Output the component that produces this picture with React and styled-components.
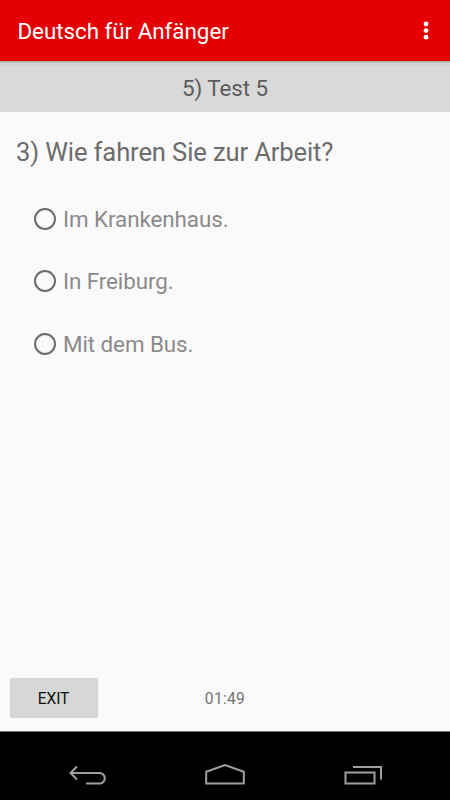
import React, { useState } from "react";
import styled, { createGlobalStyle } from "styled-components";

const GlobalStyle = createGlobalStyle`
  * {
    box-sizing: border-box;
  }

  body {
    margin: 0;
    background: #fafafa;
    font-family: Roboto, sans-serif;
  }
`;

const Screen = styled.div`
  display: flex;
  flex-direction: column;
  width: 450px;
  height: 800px;
  background: #fafafa;
  overflow: hidden;
`;

const AppBar = styled.header`
  display: flex;
  align-items: center;
  justify-content: space-between;
  flex: none;
  height: 61px;
  padding: 1px 16px 0 17.4px;
  background: #e40004;
  color: #fff;
`;

const AppTitle = styled.h1`
  margin: 0;
  font-size: 22.4px;
  font-weight: 400;
  line-height: 28px;
  letter-spacing: -0.03px;
`;

const MenuButton = styled.button`
  display: flex;
  padding: 0;
  border: none;
  background: none;
  color: inherit;
  cursor: pointer;
`;

const TestHeader = styled.div`
  display: flex;
  align-items: center;
  justify-content: center;
  flex: none;
  height: 51px;
  padding-top: 2px;
  background: linear-gradient(#8c8c8c 0, #bcbcbc 1px, #cfcfcf 2px, #d9d9d9 6px);
  color: #5c5c5c;
  font-size: 22.4px;
  letter-spacing: -0.1px;
`;

const Content = styled.main`
  display: flex;
  flex-direction: column;
  flex: 1;
  padding: 25px 16px 0;
`;

const Question = styled.h2`
  margin: 0;
  color: #6c6c6c;
  font-size: 25.6px;
  font-weight: 400;
  line-height: 30px;
  letter-spacing: -0.13px;
  white-space: nowrap;
`;

const Options = styled.div`
  display: flex;
  flex-direction: column;
  margin: 20.7px 0 0 18px;
`;

const Option = styled.label`
  display: flex;
  align-items: center;
  height: 62.4px;
  color: #8a8a8a;
  font-size: 22.4px;
  letter-spacing: -0.08px;
  cursor: pointer;
`;

const Radio = styled.input`
  appearance: none;
  width: 22px;
  height: 22px;
  margin: 0 7px 0 0;
  border: 2px solid #6b6b6b;
  border-radius: 50%;

  &:checked {
    background: radial-gradient(#e40004 5px, transparent 6px);
    border-color: #e40004;
  }
`;

const Footer = styled.footer`
  display: grid;
  grid-template-columns: 1fr auto 1fr;
  align-items: center;
  flex: none;
  height: 67px;
  padding: 0 9.5px;
  border-bottom: 1px solid #6f7472;
`;

const ExitButton = styled.button`
  width: 88px;
  height: 40px;
  padding: 2px 0 0;
  border: none;
  border-radius: 2px;
  background: #d6d7d7;
  box-shadow: 0 0 1px rgba(0, 0, 0, 0.15);
  color: #111;
  font-family: inherit;
  font-size: 15.6px;
  letter-spacing: -0.1px;
  cursor: pointer;
`;

const Timer = styled.span`
  padding-top: 2px;
  color: #737373;
  font-size: 15.6px;
  letter-spacing: 0.3px;
`;

const NavBar = styled.nav`
  display: flex;
  align-items: flex-end;
  justify-content: space-between;
  flex: none;
  height: 68px;
  padding: 0 66px 10px;
  background: #000;
`;

const NavIcon = styled.svg`
  width: 42px;
  height: 30px;
  fill: none;
  stroke: #a0a0a0;
  stroke-width: 2;
`;

const options = ["Im Krankenhaus.", "In Freiburg.", "Mit dem Bus."];

const App = () => {
  const [answer, setAnswer] = useState(null);

  return (
    <>
      <GlobalStyle />
      <Screen>
        <AppBar>
          <AppTitle>Deutsch für Anfänger</AppTitle>
          <MenuButton aria-label="Menu">
            <svg width="16" height="24" viewBox="0 0 16 24" fill="currentColor">
              <circle cx="8" cy="5" r="2.4" />
              <circle cx="8" cy="11.6" r="2.4" />
              <circle cx="8" cy="18.2" r="2.4" />
            </svg>
          </MenuButton>
        </AppBar>

        <TestHeader>5) Test 5</TestHeader>

        <Content>
          <Question>3) Wie fahren Sie zur Arbeit?</Question>
          <Options>
            {options.map((option) => (
              <Option key={option}>
                <Radio
                  type="radio"
                  name="answer"
                  checked={answer === option}
                  onChange={() => setAnswer(option)}
                />
                {option}
              </Option>
            ))}
          </Options>
        </Content>

        <Footer>
          <ExitButton>EXIT</ExitButton>
          <Timer>01:49</Timer>
        </Footer>

        <NavBar>
          <NavIcon viewBox="0 0 42 30">
            <path d="M11 6.5L4.5 13L11 19.5M4.5 13H33.5A5.3 5.3 0 0 1 33.5 23.6H20" />
          </NavIcon>
          <NavIcon viewBox="0 0 42 30">
            <path d="M2.2 11.8L21 5L39.8 11.8V23.6H2.2Z" />
          </NavIcon>
          <NavIcon viewBox="0 0 42 30">
            <path d="M3.5 12.5H32.5V23.6H3.5ZM11 7H39V19.5" />
          </NavIcon>
        </NavBar>
      </Screen>
    </>
  );
};

export default App;
